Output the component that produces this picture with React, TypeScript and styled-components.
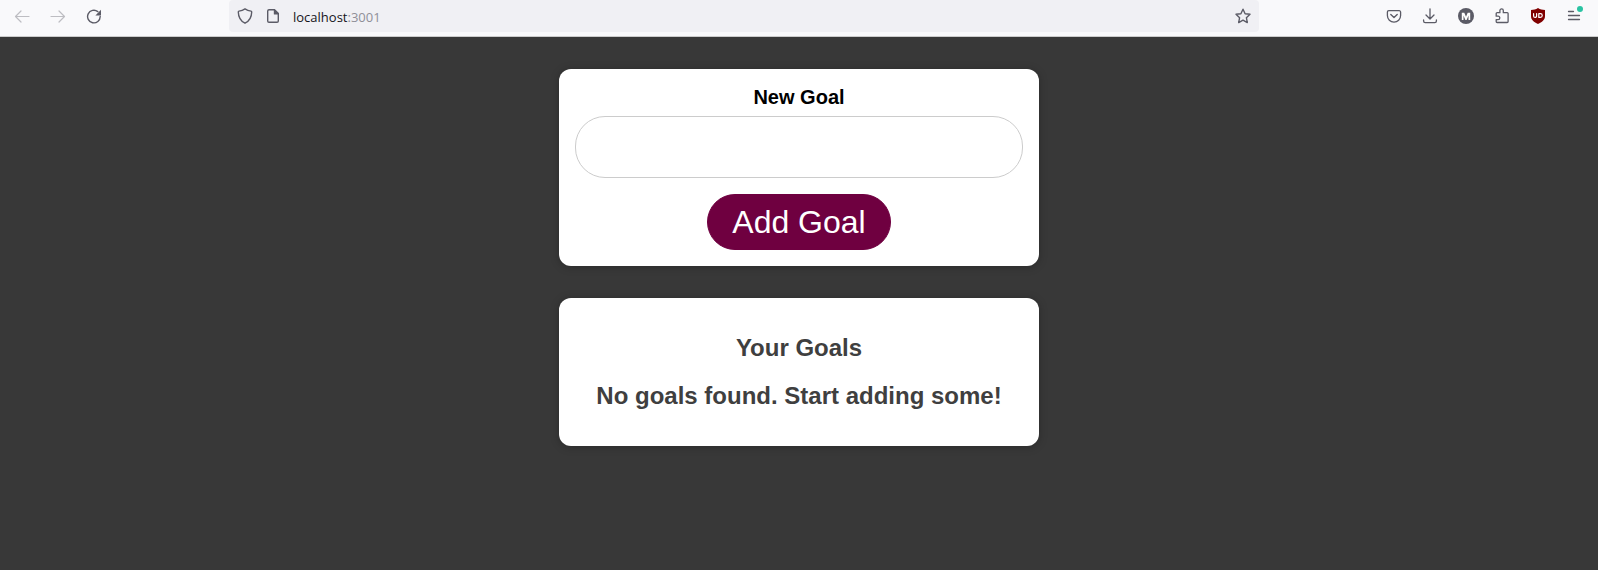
import React, { useState } from "react";
import styled, { createGlobalStyle } from "styled-components";

const GlobalStyle = createGlobalStyle`
  *, *::before, *::after { box-sizing: border-box; }
  html { background: #383838; }
  body { margin: 0; font-family: "Liberation Sans", Arial, sans-serif; }
`;

const Toolbar = styled.header`
  display: grid;
  grid-template-columns: 229px minmax(0, 1fr) 339px;
  height: 37px;
  padding-bottom: 4px;
  background: #f9f9fb;
  border-bottom: 1px solid #cccccc;
`;

const Group = styled.div<{ $end?: boolean }>`
  display: flex;
  align-items: center;
  gap: 20px;
  justify-content: ${(p) => (p.$end ? "flex-end" : "flex-start")};
  padding: ${(p) => (p.$end ? "0 16px 0 0" : "0 0 0 14px")};
`;

const IconButton = styled.button<{ $dim?: boolean }>`
  position: relative;
  flex: none;
  width: 16px;
  height: 16px;
  padding: 0;
  border: 0;
  background: none;
  color: ${(p) => (p.$dim ? "#bdbdc2" : "#5b5b66")};
  svg { display: block; }
`;

const AddressBar = styled.div`
  display: flex;
  align-items: center;
  gap: 12px;
  min-width: 0;
  padding: 0 8px;
  background: #f0f0f4;
  border-radius: 4px;
`;

const Address = styled.a`
  flex: 1;
  padding-top: 2px;
  color: #15141a;
  font: 13px/18px "Open Sans", "Noto Sans", sans-serif;
  text-decoration: none;
  span { color: #8f8f98; }
`;

const Badge = styled.span`
  position: absolute;
  top: -2px;
  right: -1px;
  width: 6px;
  height: 6px;
  border-radius: 50%;
  background: #2ac3a2;
`;

const Main = styled.main`
  display: flex;
  flex-direction: column;
  align-items: center;
  gap: 32px;
  padding: 32px 0;
`;

const Card = styled.section`
  display: flow-root;
  width: 100%;
  max-width: 480px;
  padding: 16px;
  background: #ffffff;
  border-radius: 12px;
  box-shadow: 0 1px 8px rgba(0, 0, 0, 0.25);
  text-align: center;
`;

const GoalForm = styled.form`
  display: flex;
  flex-direction: column;
  align-items: center;
`;

const Label = styled.label`
  margin-bottom: 6px;
  font-size: 20px;
  font-weight: bold;
  line-height: 25px;
`;

const GoalInput = styled.input`
  width: 100%;
  margin-bottom: 16px;
  padding: 8px 24px;
  border: 1px solid #cccccc;
  border-radius: 30px;
  background: #ffffff;
  font: 32px/44px "Liberation Sans", Arial, sans-serif;
`;

const AddButton = styled.button`
  padding: 8px 24px;
  border: 1px solid #6f0040;
  border-radius: 30px;
  background: #6f0040;
  color: #ffffff;
  font: 32px/38px "Liberation Sans", Arial, sans-serif;
`;

const Heading = styled.h2`
  margin: 20px 0;
  color: #3f3f3f;
  font-size: 24px;
  line-height: 28px;
`;

const Glyph = ({ children }: { children: React.ReactNode }) => (
  <svg width="16" height="16" viewBox="0 0 16 16" fill="none" stroke="currentColor" strokeWidth="1.2" strokeLinecap="round" strokeLinejoin="round" aria-hidden="true">
    {children}
  </svg>
);

export default function App() {
  const [goal, setGoal] = useState("");
  return (
    <>
      <GlobalStyle />
      <Toolbar>
        <Group>
          <IconButton $dim aria-label="Back"><Glyph><path d="M15 8.5H1.5M7 3 1.5 8.5 7 14" /></Glyph></IconButton>
          <IconButton $dim aria-label="Forward"><Glyph><path d="M1 8.5h13.5M9 3l5.5 5.5L9 14" /></Glyph></IconButton>
          <IconButton aria-label="Reload">
            <Glyph>
              <path strokeWidth="1.4" d="M14.2 8.5A6.3 6.3 0 1 1 11.8 3.6" />
              <path fill="currentColor" stroke="none" d="M15 1.8v5.1a.5.5 0 0 1-.5.5H9.4z" />
            </Glyph>
          </IconButton>
        </Group>
        <AddressBar>
          <IconButton aria-label="Tracking protection"><Glyph><path strokeWidth="1.4" d="M8 .9C9.8 2.2 11.700 2.900 14 3.100q.7.1.7.8C14.600 9 12.300 13 8 15.200 3.700 13 1.400 9 1.300 3.900q0-.7.7-.8C4.300 2.900 6.200 2.200 8 .9z" /></Glyph></IconButton>
          <IconButton aria-label="Site information">
            <Glyph>
              <path strokeWidth="1.4" d="M9.500 1.800H4A1.300 1.300 0 0 0 2.700 3v10A1.300 1.300 0 0 0 4 14.300h8a1.300 1.300 0 0 0 1.300-1.300V5.600z" />
              <path fill="currentColor" stroke="none" d="M8.800 1.200h.8L14 5.600v.8H9.300a.5.5 0 0 1-.5-.5z" />
            </Glyph>
          </IconButton>
          <Address href="#">localhost<span>:3001</span></Address>
          <IconButton aria-label="Bookmark this page"><Glyph><path strokeWidth="1.4" d="m8 1.200 2.100 4.500 4.900.6-3.600 3.400.9 4.900L8 12.200l-4.300 2.400.9-4.900L1 6.300l4.900-.6z" /></Glyph></IconButton>
        </AddressBar>
        <Group $end>
          <IconButton aria-label="Save to Pocket"><Glyph><path strokeWidth="1.3" d="M2.800 2.700h10.400a1.400 1.400 0 0 1 1.400 1.400v3.400a6.600 6.600 0 0 1-13.200 0V4.100a1.400 1.400 0 0 1 1.400-1.400z" /><path strokeWidth="1.4" d="M4.800 6.400 8 9.400l3.200-3" /></Glyph></IconButton>
          <IconButton aria-label="Downloads"><Glyph><path strokeWidth="1.3" d="M8 .8v10M4 7l4 4 4-4M1.600 12v1a1.600 1.600 0 0 0 1.600 1.600h9.600a1.600 1.600 0 0 0 1.600-1.600v-1" /></Glyph></IconButton>
          <IconButton aria-label="Account">
            <Glyph><circle cx="8" cy="8" r="8" fill="currentColor" stroke="none" /><path fill="#fff" stroke="none" d="M3.800 12V4.800h2.500L8 8.800l1.700-4h2.500V12h-1.700V7.400L8.600 12H7.400L5.500 7.400V12z" /></Glyph>
          </IconButton>
          <IconButton aria-label="Extensions"><Glyph><path strokeWidth="1.3" d="M2.200 7.200V5.600a.9.9 0 0 1 .9-.9h2.800V2.600a1.700 1.700 0 0 1 3.400 0v2.100h3.900a.9.9 0 0 1 .9.9v8a.9.9 0 0 1-.9.9H3.100a.9.9 0 0 1-.9-.9v-2h1.900a1.600 1.600 0 0 0 0-3.400H2.200z" /></Glyph></IconButton>
          <IconButton aria-label="uBlock Origin">
            <Glyph><path fill="#800000" stroke="none" d="M8 0c2.300 1.400 4.300 1.900 7 2v6c0 4-3 6.200-7 8-4-1.800-7-4-7-8V2c2.700-.1 4.700-.6 7-2z" /><path stroke="#fff" strokeWidth="1.2" d="M3.600 5.700v2.200a1.500 1.500 0 0 0 3 0V5.700M8.800 5.700h1.600a1.850 1.850 0 0 1 0 3.700H8.800z" /></Glyph>
          </IconButton>
          <IconButton aria-label="Open application menu">
            <Glyph><path strokeWidth="1.3" d="M2.500 3.500h5M2.500 7.500h11M2.500 11.500h11" /></Glyph>
            <Badge />
          </IconButton>
        </Group>
      </Toolbar>
      <Main>
        <Card>
          <GoalForm onSubmit={(e) => e.preventDefault()}>
            <Label htmlFor="goal">New Goal</Label>
            <GoalInput id="goal" type="text" value={goal} onChange={(e) => setGoal(e.target.value)} />
            <AddButton type="submit">Add Goal</AddButton>
          </GoalForm>
        </Card>
        <Card>
          <Heading>Your Goals</Heading>
          <Heading>No goals found. Start adding some!</Heading>
        </Card>
      </Main>
    </>
  );
}
